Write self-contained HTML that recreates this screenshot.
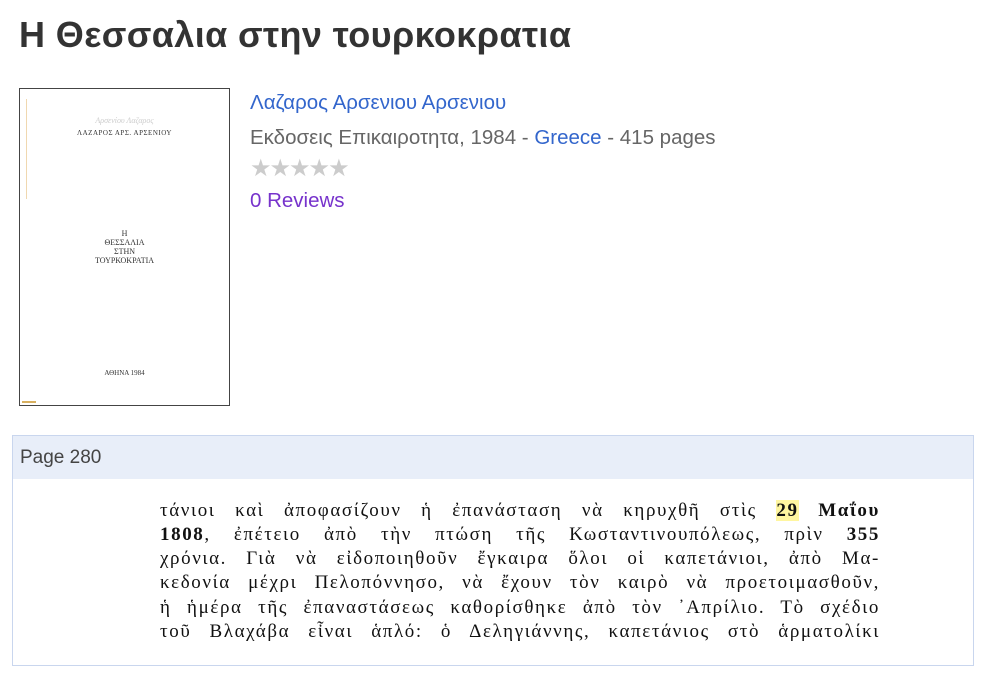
<!DOCTYPE html>
<html><head><meta charset="utf-8">
<style>
body{margin:0;background:#fff;width:996px;height:680px;overflow:hidden;font-family:"Liberation Sans",Arial,sans-serif;position:relative}
h1{position:absolute;left:19px;top:14px;margin:0;font-size:36px;font-weight:bold;color:#333;letter-spacing:0.4px;white-space:nowrap}
.cover{position:absolute;left:19px;top:88px;width:209px;height:316px;border:1px solid #444;background:#fff}
.cover div{position:absolute;width:100%;text-align:center;font-family:"Liberation Serif",serif;color:#333}
.info{position:absolute;left:250px;font-size:20.5px;white-space:nowrap}
.panel{position:absolute;left:12px;top:435px;width:962px;height:231px;border:1px solid #c9d6ee;box-sizing:border-box}
.ph{height:43px;background:#e8eef9;font-size:19px;color:#444;line-height:44px;padding-left:7px}
.txt{position:absolute;left:160px;width:720px;font-family:"Liberation Serif","DejaVu Serif",serif;font-size:19px;letter-spacing:1.6px;color:#111}
.l{position:absolute;left:0;width:720px;text-align:justify;text-align-last:justify;white-space:nowrap;height:24px}
</style></head><body>
<h1>Η Θεσσαλια στην τουρκοκρατια</h1>
<div class="cover">
 <div style="top:40px;font-size:7px;letter-spacing:.5px">ΛΑΖΑΡΟΣ ΑΡΣ. ΑΡΣΕΝΙΟΥ</div>
 <div style="top:27px;font-size:8px;color:#ccc;font-style:italic">Αρσενίου Λαζαρος</div>
 <div style="top:140px;font-size:8px;line-height:9px">Η<br>ΘΕΣΣΑΛΙΑ<br>ΣΤΗΝ<br>ΤΟΥΡΚΟΚΡΑΤΙΑ</div>
 <div style="top:280px;font-size:7px">ΑΘΗΝΑ 1984</div>
 <div style="left:6px;top:10px;width:1px;height:100px;background:#f0d8b0"></div>
 <div style="left:2px;top:312px;width:14px;height:2px;background:#d8b060"></div>
</div>
<div class="info" style="top:91px;color:#3366cc">Λαζαρος Αρσενιου Αρσενιου</div>
<div class="info" style="top:126px;color:#666">Εκδοσεις Επικαιροτητα, 1984 - <span style="color:#3366cc">Greece</span> - 415 pages</div>
<div class="info" style="top:154px;color:#ccc;font-size:24px;letter-spacing:-2px;font-family:'DejaVu Sans',sans-serif">★★★★★</div>
<div class="info" style="top:189px;color:#7733cc">0 Reviews</div>
<div class="panel"><div class="ph">Page 280</div></div>
<div class="txt">
<div class="l" style="top:500px">τάνιοι καὶ ἀποφασίζουν ἡ ἐπανάσταση νὰ κηρυχθῆ στὶς <span style="background:#fff6a0;font-weight:bold">29</span> <b>Μαΐου</b></div>
<div class="l" style="top:524px"><b>1808</b>, ἐπέτειο ἀπὸ τὴν πτώση τῆς Κωσταντινουπόλεως, πρὶν <b>355</b></div>
<div class="l" style="top:548px">χρόνια. Γιὰ νὰ εἰδοποιηθοῦν ἔγκαιρα ὅλοι οἱ καπετάνιοι, ἀπὸ Μα-</div>
<div class="l" style="top:572px">κεδονία μέχρι Πελοπόννησο, νὰ ἔχουν τὸν καιρὸ νὰ προετοιμασθοῦν,</div>
<div class="l" style="top:597px">ἡ ἡμέρα τῆς ἐπαναστάσεως καθορίσθηκε ἀπὸ τὸν ᾿Απρίλιο. Τὸ σχέδιο</div>
<div class="l" style="top:621px">τοῦ Βλαχάβα εἶναι ἁπλό: ὁ Δεληγιάννης, καπετάνιος στὸ ἁρματολίκι</div>
</div>
</body></html>
